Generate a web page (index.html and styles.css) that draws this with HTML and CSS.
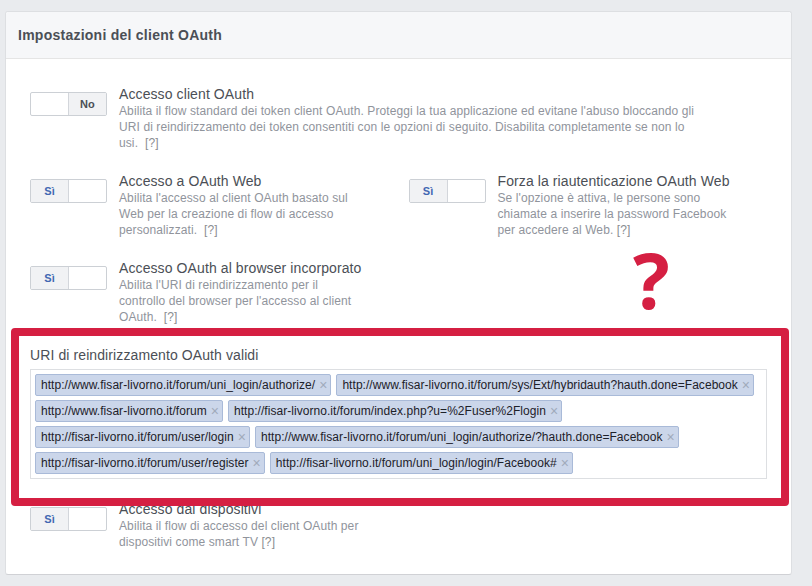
FILE: index.html
```html
<!DOCTYPE html>
<html>
  <head>
    <meta charset="UTF-8">
    <title>Impostazioni del client OAuth</title>
    <link rel="stylesheet" href="styles.css">
  </head>
  <body>
    <div class="card">
      <div class="card-header">Impostazioni del client OAuth</div>

      <div class="card-body">
        <div class="option wide">
          <div class="switch"><span></span><span class="on">No</span></div>
          <div class="option-text">
            <div class="option-title">Accesso client OAuth</div>
            <div class="option-desc">Abilita il flow standard dei token client OAuth. Proteggi la tua applicazione ed evitane l'abuso bloccando gli URI di reindirizzamento dei token consentiti con le opzioni di seguito. Disabilita completamente se non lo usi.&nbsp; <span class="help">[?]</span></div>
          </div>
        </div>

        <div class="option-pair">
          <div class="option">
            <div class="switch"><span class="on yes">Sì</span><span></span></div>
            <div class="option-text">
              <div class="option-title">Accesso a OAuth Web</div>
              <div class="option-desc">Abilita l'accesso al client OAuth basato sul Web per la creazione di flow di accesso personalizzati.&nbsp; <span class="help">[?]</span></div>
            </div>
          </div>
          <div class="option">
            <div class="switch"><span class="on yes">Sì</span><span></span></div>
            <div class="option-text">
              <div class="option-title">Forza la riautenticazione OAuth Web</div>
              <div class="option-desc">Se l'opzione è attiva, le persone sono chiamate a inserire la password Facebook per accedere al Web. <span class="help">[?]</span></div>
            </div>
          </div>
        </div>

        <div class="option">
          <div class="switch"><span class="on yes">Sì</span><span></span></div>
          <div class="option-text">
            <div class="option-title">Accesso OAuth al browser incorporato</div>
            <div class="option-desc">Abilita l'URI di reindirizzamento per il controllo del browser per l'accesso al client OAuth.&nbsp; <span class="help">[?]</span></div>
          </div>
        </div>

        <div class="field">
          <label class="field-label">URI di reindirizzamento OAuth validi</label>
          <div class="tokens">
            <span class="token">http://www.fisar-livorno.it/forum/uni_login/authorize/<i>×</i></span>
            <span class="token">http://www.fisar-livorno.it/forum/sys/Ext/hybridauth?hauth.done=Facebook<i>×</i></span>
            <span class="token">http://www.fisar-livorno.it/forum<i>×</i></span>
            <span class="token">http://fisar-livorno.it/forum/index.php?u=%2Fuser%2Flogin<i>×</i></span>
            <span class="token">http://fisar-livorno.it/forum/user/login<i>×</i></span>
            <span class="token">http://www.fisar-livorno.it/forum/uni_login/authorize/?hauth.done=Facebook<i>×</i></span>
            <span class="token">http://fisar-livorno.it/forum/user/register<i>×</i></span>
            <span class="token">http://fisar-livorno.it/forum/uni_login/login/Facebook#<i>×</i></span>
          </div>
        </div>

        <div class="option">
          <div class="switch"><span class="on yes">Sì</span><span></span></div>
          <div class="option-text">
            <div class="option-title">Accesso dai dispositivi</div>
            <div class="option-desc">Abilita il flow di accesso del client OAuth per dispositivi come smart TV <span class="help">[?]</span></div>
          </div>
        </div>
      </div>

      <!-- annotation drawn over the screenshot -->
      <div class="mark-box"></div>
      <div class="mark-question">?</div>
    </div>
  </body>
</html>
```

FILE: styles.css
```css
body {
  margin: 0;
  background: #e9ebee;
  font-family: 'Liberation Sans', Arial, sans-serif;
  color: #4b4f56;
  letter-spacing: 0.1px;
}

.card {
  position: relative;
  box-sizing: border-box;
  width: 787px;
  margin: 11px 0 0 5px;
  background: #fff;
  border: 1px solid #dddfe2;
  border-bottom-color: #d0d1d5;
  border-radius: 3px;
}

.card-header {
  padding: 14px 12px;
  background: #f6f7f9;
  border-bottom: 1px solid #e5e5e5;
  border-radius: 3px 3px 0 0;
  font-size: 14px;
  line-height: 18px;
  font-weight: bold;
  letter-spacing: 0.25px;
  color: #4b4f56;
}

.card-body {
  display: flex;
  flex-direction: column;
  gap: 21px;
  padding: 26px 24px 24px;
}

.option {
  display: flex;
  gap: 12px;
}

.option-pair {
  display: grid;
  grid-template-columns: 1fr 1fr;
  column-gap: 20px;
}

.switch {
  flex: none;
  display: flex;
  box-sizing: border-box;
  width: 77px;
  height: 24px;
  margin-top: 7px;
  border: 1px solid #ccd0d5;
  border-radius: 2px;
  background: #fff;
  overflow: hidden;
}

.switch span {
  flex: 1;
}

.switch .on {
  background: #f1f2f4;
  font-size: 11px;
  font-weight: bold;
  line-height: 22px;
  text-align: center;
  color: #4b4f56;
  border-left: 1px solid #d3d6db;
}

.switch .on.yes {
  color: #4267b2;
  border-left: 0;
  border-right: 1px solid #d3d6db;
}

.option-title {
  font-size: 14px;
  line-height: 18px;
  color: #4b4f56;
}

.option-desc {
  max-width: 244px;
  font-size: 12px;
  line-height: 16px;
  color: #90949c;
}

.wide .option-desc {
  max-width: 586px;
}

.help {
  color: #8a8d91;
}

.field-label {
  display: block;
  margin-bottom: 5px;
  font-size: 14px;
  line-height: 18px;
  color: #4b4f56;
}

.tokens {
  display: flex;
  flex-wrap: wrap;
  gap: 4px 5px;
  padding: 4px;
  border: 1px solid #dddfe2;
}

.token {
  display: inline-flex;
  align-items: center;
  gap: 4px;
  height: 22px;
  box-sizing: border-box;
  padding: 0 3px 0 5px;
  background: #cbd6ea;
  border: 1px solid #a9bad8;
  border-radius: 2px;
  font-size: 12px;
  letter-spacing: 0.05px;
  color: #1d2129;
}

.token i {
  font-style: normal;
  font-size: 14px;
  line-height: 14px;
  color: #a0aabb;
}

.mark-box {
  position: absolute;
  left: 5px;
  top: 316px;
  width: 778px;
  height: 178px;
  box-sizing: border-box;
  border: 8px solid #d51f42;
  border-radius: 4px;
}

.mark-question {
  position: absolute;
  left: 627px;
  top: 229px;
  font-family: 'Open Sans', 'Liberation Sans', sans-serif;
  font-size: 77px;
  line-height: 77px;
  font-weight: bold;
  color: #d51f42;
}
```
